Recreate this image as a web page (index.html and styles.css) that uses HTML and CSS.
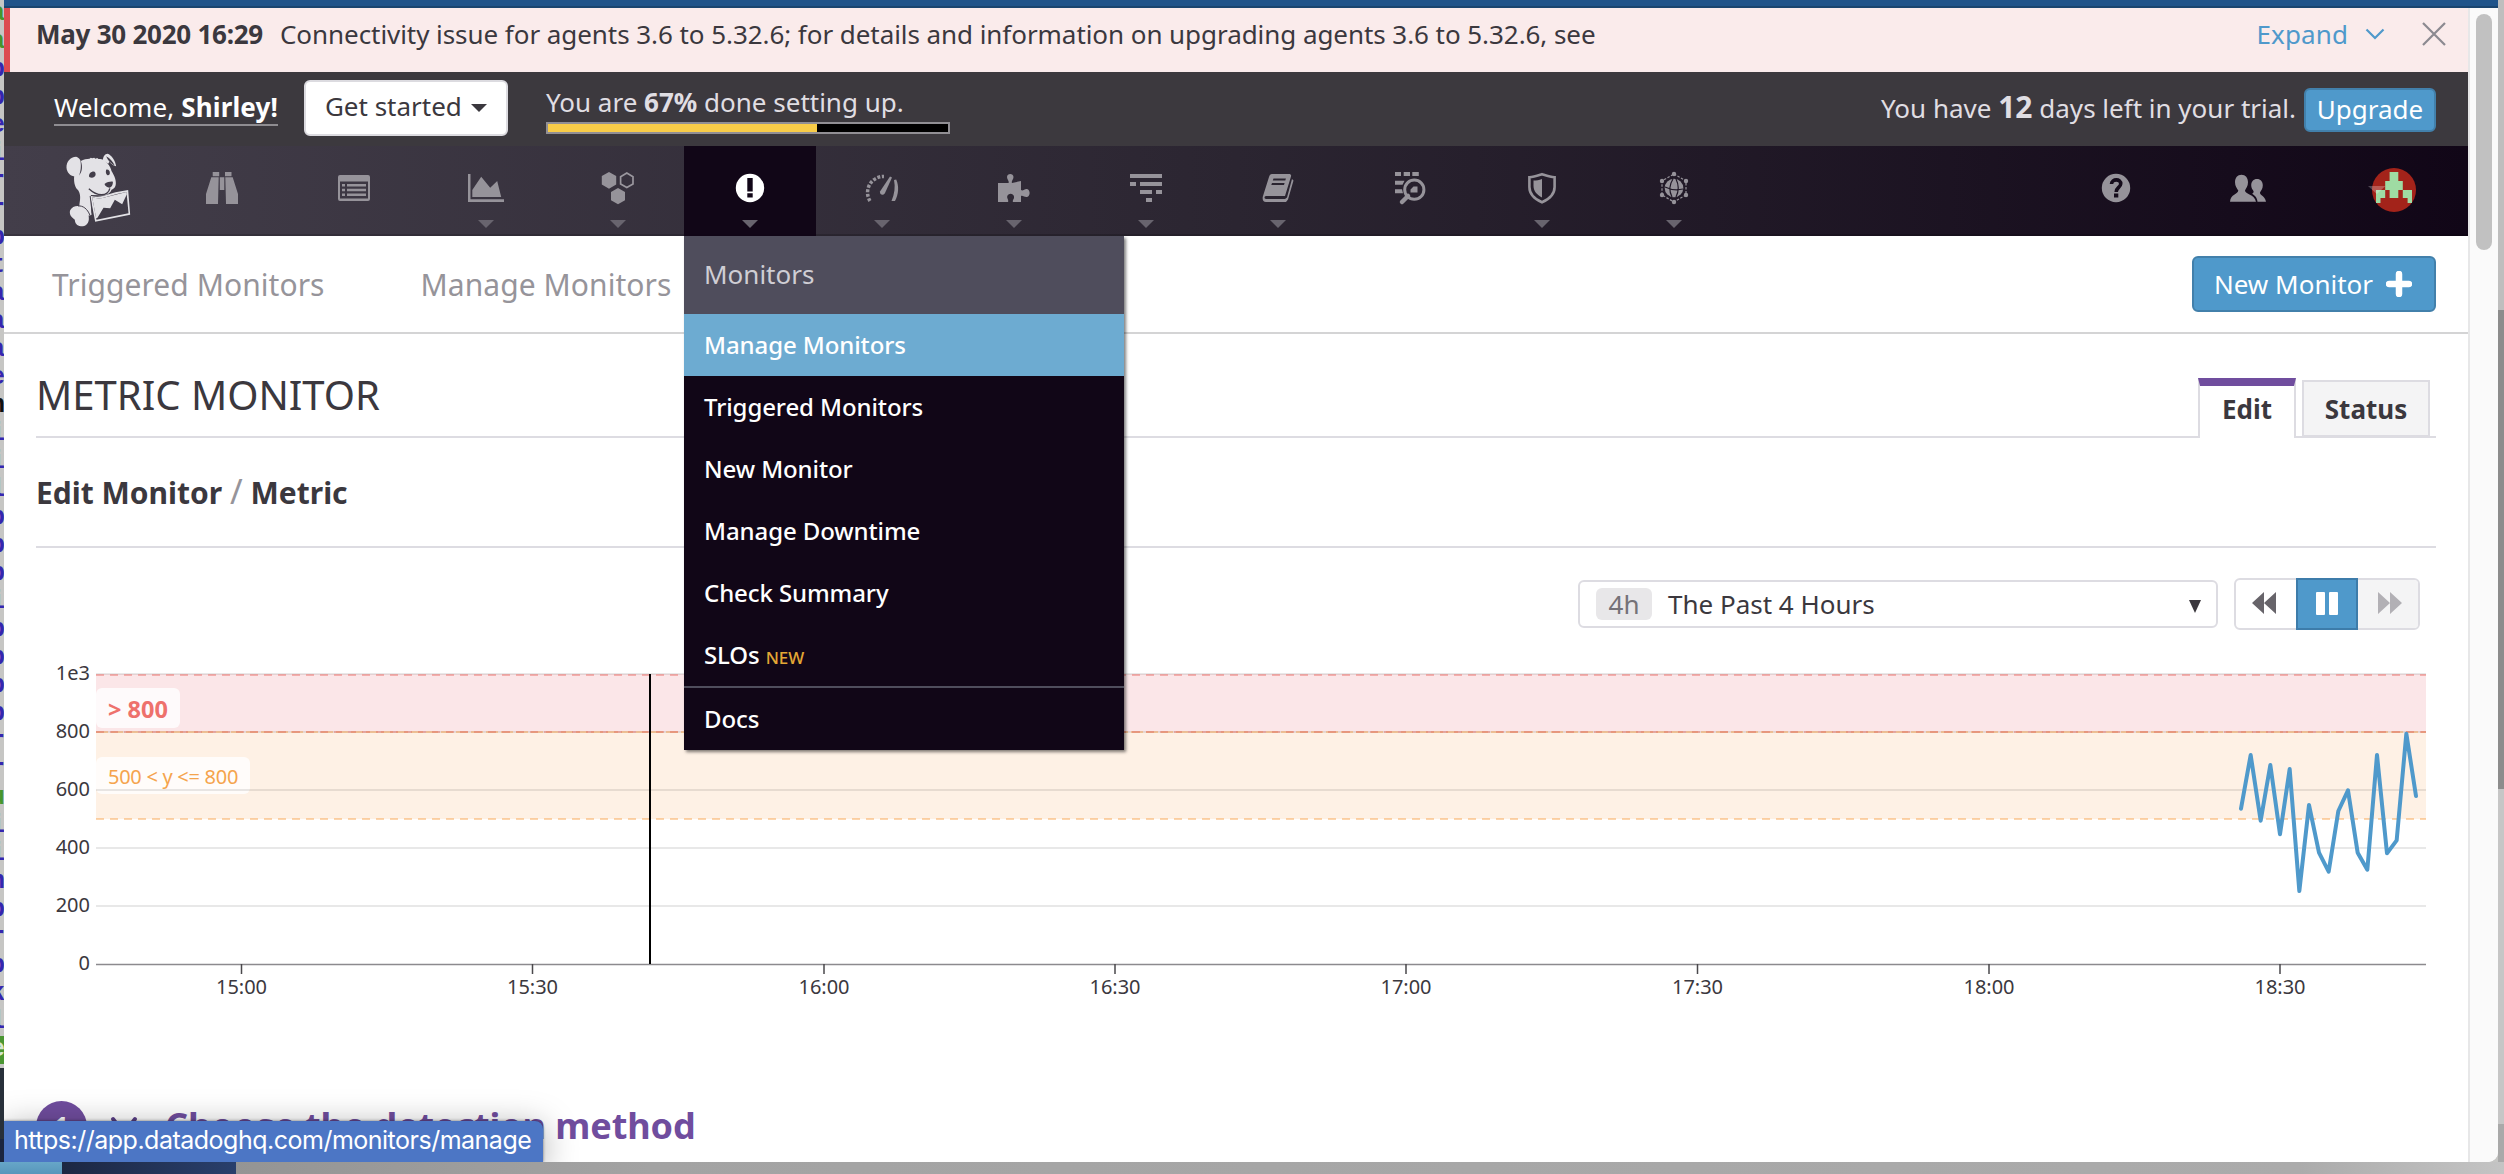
FILE: index.html
```html
<!DOCTYPE html>
<html lang="en">
<head>
<meta charset="utf-8">
<title>Metric Monitor</title>
<link rel="stylesheet" href="styles.css">
</head>
<body>
<div class="desktop">
  <div class="code-strip"><span class="g">a</span><span class="g">a</span><span>p</span><span>p</span><span>e</span><span>i</span><span>r</span><span>r</span><span>p</span><span>t</span><span>a</span><span>a</span><span>a</span><span>e</span><span class="k">n</span><span>i</span><span>i</span><span>l</span><span>p</span><span>p</span><span>p</span><span>i</span><span>p</span><span>p</span><span>p</span><span>p</span><span>r</span><span>r</span><span class="g">u</span><span>i</span><span>i</span><span>n</span><span>p</span><span>r</span><span>p</span><span>k</span><span>l</span><span class="hl">e</span></div>
  <div class="window">
    <div class="page">
      <div class="banner">
        <strong>May 30 2020 16:29</strong>
        <span class="banner-text">Connectivity issue for agents 3.6 to 5.32.6; for details and information on upgrading agents 3.6 to 5.32.6, see</span>
        <a class="expand">Expand</a>
        <svg class="chev" width="20" height="12" viewBox="0 0 20 12"><path d="M1.5 1.5 10 10l8.500-8.500" fill="none" stroke="#4f99cb" stroke-width="2.200"/></svg>
        <svg class="close" width="24" height="24" viewBox="0 0 24 24"><path d="M1 1 23 23M23 1 1 23" stroke="#8b8990" stroke-width="2.200"/></svg>
      </div>
      <div class="trial">
        <a class="welcome">Welcome, <b>Shirley!</b></a>
        <button class="start">Get started<i class="caret"></i></button>
        <div class="setup">
          <div>You are <b>67%</b> done setting up.</div>
          <div class="bar"><div class="fill"></div></div>
        </div>
        <div class="left-days">You have <b>12</b> days left in your trial.</div>
        <button class="upgrade">Upgrade</button>
      </div>
      <nav class="nav">
        <a class="logo"><svg width="65" height="74" viewBox="48 28 194 222">
          <g fill="#e3e2e6">
            <path d="M78 39C60 40 48 54 49 72C50 86 60 98 76 98C88 96 96 84 95 66C94 52 88 42 78 39z"/>
            <path d="M92 52C100 47 110 45 118 45L122 42L126 44L132 42L136 45L141 43L145 46C152 46 158 47 162 50C172 58 182 70 184 82C190 92 198 106 197 120C196 132 190 136 184 138C180 150 168 155 154 155L122 154L124 214L112 216L86 200L88 180C92 160 90 150 84 140C76 132 70 120 72 96z"/>
            <path d="M158 50C158 40 164 30 172 30C184 33 196 52 198 68C190 66 182 60 178 54L174 60z"/>
            <path d="M60 200C66 188 82 184 96 190C110 196 118 212 116 228C114 242 104 249 92 248C80 246 74 238 74 228C64 222 56 212 60 200z"/>
            <path fill-rule="evenodd" d="M120 156C132 159 144 161 158 157L196 146L234 139L240 213L135 234zM126 161L139 228L235 209L229 145L200 151L160 162C148 166 138 164 126 161z"/>
            <path d="M126 161C138 164 148 166 160 162L229 145L230 152L216 182L194 168L180 194L160 192L142 222L138 224z"/>
          </g>
          <g fill="#433e4a">
            <path d="M90 48C98 62 98 84 86 96C92 84 94 64 90 48zM168 38C180 44 188 54 194 66C182 60 172 50 168 38z"/>
            <path d="M126 84C134 81 138 88 136 95C133 103 124 104 117 100C115 92 119 86 126 84zM168 78C175 76 180 82 179 89C178 95 174 96 171 94C167 90 166 84 168 78zM163 121C171 115 181 113 188 114C189 122 184 131 178 132C171 131 165 128 163 121z"/>
          </g>
          <path d="M116 135C128 146 140 153 154 153C168 153 176 147 179 134" fill="none" stroke="#433e4a" stroke-width="4"/>
          <path d="M84 187C98 185 112 196 119 214M120 157L126 208" fill="none" stroke="#433e4a" stroke-width="3"/>
        </svg></a>
        <a class="item"><svg class="ic" viewBox="0 0 36 36"><path d="M8.700 2h6.500v4.300H8.700zM21 2h6.500v4.300H21zM7.300 7.300h7.400L14 34H2V24zM28.700 7.300h-7.400L22 34h12V24zM15.800 7.300h4.500V20h-4.500z"/></svg></a>
        <a class="item"><svg class="ic" viewBox="0 0 36 36"><path fill-rule="evenodd" d="M4 5h28a2 2 0 0 1 2 2v22a2 2 0 0 1-2 2H4a2 2 0 0 1-2-2V7a2 2 0 0 1 2-2zM4 11.500v17h28v-17z"/><path d="M6 14h3v2.500H6zM11 14h19v2.500H11zM6 18.800h3v2.500H6zM11 18.800h19v2.500H11zM6 23.500h3V26H6zM11 23.500h19V26H11z"/></svg></a>
        <a class="item more"><svg class="ic" viewBox="0 0 36 36"><path d="M0 4h2.500v25.200H36V32H0zM4.300 27v-7l8.900-13.300 9 11 7-6.700 4 16z"/></svg></a>
        <a class="item more"><svg class="ic" viewBox="0 0 36 36"><path d="m9 2 7.200 4v8.500L9 18.700l-7.200-4.200V6zM18 18l7 4v8.200l-7 4.100-7-4.100V22z"/><path d="m26.800 3 6.200 3.700v7.200l-6.200 3.700-6.200-3.700V6.700z" fill="none" stroke="#9a979e" stroke-width="1.700"/></svg></a>
        <div class="item more active"><svg class="ic" viewBox="0 0 36 36"><circle cx="18" cy="18" r="14.200" fill="#fff"/><path d="M15.300 8h5.400v13.500h-5.400zM15.300 23.200h5.400v4.200h-5.400z" fill="#110617"/></svg>
          <div class="menu">
            <div class="menu-head">Monitors</div>
            <a class="sel">Manage Monitors</a>
            <a>Triggered Monitors</a>
            <a>New Monitor</a>
            <a>Manage Downtime</a>
            <a>Check Summary</a>
            <a>SLOs <small>NEW</small></a>
            <a class="docs">Docs</a>
          </div>
        </div>
        <a class="item more"><svg class="ic" viewBox="0 0 36 36"><path d="M6 31A16 16 0 0 1 20 6.500" fill="none" stroke="#96939a" stroke-width="3.500" stroke-dasharray="3 1.600"/><path d="M26 6.500 28 7.600 21 23c-1.500 3-5.500 2-5-1.500z"/><path d="m30 10 2.200-.5c3 6.500 2.500 15-1.200 21.500h-3.500c3-7 4-14 2.500-21z"/></svg></a>
        <a class="item more"><svg class="ic" viewBox="0 0 36 36"><path d="M2 13h10.500c1-2-1.500-3.500-1.500-6 0-4 6.500-4 6.500 0 0 2.500-2.500 4-1.500 6l9-2v9c2 1.500 3.500-1.500 6-1 3.500 1 3.500 7 0 8-2.500.5-4-2-6-1v6h-8c-1-2 1.500-3 1-5.500-.8-3.800-6-3.800-6.800 0-.4 2.500 1.800 3.500.8 5.500H2z"/></svg></a>
        <a class="item more"><svg class="ic" viewBox="0 0 36 36"><path d="M2 4h32v4H2zM2 12h6v4H2zM12 12h22v4H12zM12 20h12v4H12zM28 20h6v4h-6zM18 28h6v4h-6z"/></svg></a>
        <a class="item more"><svg class="ic" viewBox="0 0 36 36"><path fill-rule="evenodd" d="M12 4h17c1.500 0 2.500 1 2 2.500L25 26H6c-2 0-2 3 0 3h19l2-1.500L32 9l1.500 1.500-5.500 19-2 2.500H6c-3 0-4-3-3-6L9 7c.5-2 1.500-3 3-3zM13.500 8.500l-.7 2h12.500l.6-2zM12 13l-.7 2H24l.6-2z"/></svg></a>
        <a class="item"><svg class="ic" viewBox="0 0 36 36"><path d="M3 2h6v4H3zM11.700 2H18v4h-6.300zM20.300 2h6.500v4h-6.500zM3 10.700h9.500l-2 4H3zM3 19.300h7l1 4H3zM18.500 22.500v-3l3-3h4v6z"/><circle cx="22.300" cy="19.700" r="9.600" fill="none" stroke="#96939a" stroke-width="3"/><path d="m16 26-6 6" stroke="#96939a" stroke-width="4.500" stroke-linecap="round"/></svg></a>
        <a class="item more"><svg class="ic" viewBox="0 0 36 36"><path d="M18 4.200c4 1.200 8 2.600 12.600 3V17c0 7-5 12-12.600 15.300C10.400 29 5.400 24 5.400 17V7.200C10 6.800 14 5.400 18 4.200z" fill="none" stroke="#96939a" stroke-width="2.600"/><path d="M18 9v18.500C13 25 9.500 21 9.500 16v-5.500C12.500 10.500 15 10 18 9z"/></svg></a>
        <a class="item more"><svg class="ic" viewBox="0 0 36 36"><path d="m18 4 12 7v14l-12 7-12-7V11z" fill="none" stroke="#96939a" stroke-width="1.200" stroke-dasharray="2.500 1.500"/><circle cx="18" cy="18" r="9.300"/><path d="M9 17c6 3 12 3.500 18 2M17 9c-4 6-4 12-1 18M20 9c3 6 3 12 0 18" fill="none" stroke="#211a28" stroke-width="1.200"/><circle cx="18" cy="4" r="2.200"/><circle cx="18" cy="32" r="2.200"/><circle cx="6" cy="11" r="2.200"/><circle cx="30" cy="11" r="2.200"/><circle cx="6" cy="25" r="2.200"/><circle cx="30" cy="25" r="2.200"/></svg></a>
        <a class="item push"><svg class="ic" viewBox="0 0 36 36"><circle cx="18" cy="18" r="14.200"/><path d="M13.500 14c.3-5.500 9.500-5.500 9.200 0-.2 3.500-4.500 3.500-4.500 8" fill="none" stroke="#150c1b" stroke-width="3.600"/><path d="M16 23.600h4.300v4H16z" fill="#150c1b"/></svg></a>
        <a class="item"><svg class="ic" viewBox="0 0 36 36"><path d="M11.500 4.700c4 0 6.500 3 6.500 7.500 0 4-2 6-3 8.300 0 4 9.500 3.500 11 11.300H0C.5 24 8 24.500 8.300 20.500 7 18.300 5 16.300 5 12.200c0-4.500 2.500-7.500 6.500-7.500z"/><path d="M27 9c3.500 0 5.800 2.600 5.800 6.300 0 3.700-1.800 5-2.800 7.200 0 3.500 5 3 6 9.300h-8.500c-.5-4.800-3-6.500-5.500-8 1.500-.8 1.800-1.800 1.500-2.800-1.200-1.800-2.300-3-2.300-5.700C21.200 11.600 23.500 9 27 9z"/></svg></a>
        <a class="user"><svg width="48" height="44" viewBox="0 0 48 44"><ellipse cx="26" cy="22" rx="22" ry="22" fill="#a3231a"/><path d="M21.600 4h8.700v9h4.500v9h9.200v13h-4.400v-5h-4.800v-8h-4.500v8h-8.700v-8h-4.400v8H12.500v5H8V22h9.200v-9h4.400z" fill="#9fdba3"/><path d="M0 18h17.500l-8.700 8z" fill="#fff" opacity=".25"/></svg></a>
      </nav>
      <div class="subnav"><a class="trig">Triggered Monitors</a><a>Manage Monitors</a>
        <button class="new">New Monitor <svg width="26" height="26" viewBox="0 0 26 26"><path d="M13 3v20M3 13h20" stroke="#fff" stroke-width="6.500" stroke-linecap="round"/></svg></button></div>
      <main class="main">
        <div class="title-row"><h1>METRIC MONITOR</h1><div class="tabs"><a class="tab on">Edit</a><a class="tab">Status</a></div></div>
        <h2>Edit Monitor <i>/</i> Metric</h2>
        <div class="controls">
          <div class="select"><span class="pill">4h</span><span>The Past 4 Hours</span><svg width="12" height="13" viewBox="0 0 12 13"><path d="M0 0h12L6 13z" fill="#3b383e"/></svg></div>
          <div class="player">
            <a class="rew"><svg width="24" height="22" viewBox="0 0 24 22"><path d="M12 0v22L0 11zM24 0v22L12 11z" fill="#67646a"/></svg></a>
            <a class="pause"><svg width="24" height="24" viewBox="0 0 24 24"><rect x="1" y="1" width="9" height="23" rx="1" fill="#fff"/><rect x="14" y="1" width="9" height="23" rx="1" fill="#fff"/></svg></a>
            <a class="fwd"><svg width="24" height="22" viewBox="0 0 24 22"><path d="M0 0v22l12-11zM12 0v22l12-11z" fill="#b2b0b5"/></svg></a>
          </div>
        </div>
        <svg class="chart" width="2400" height="370" viewBox="36 650 2400 370">
          <rect x="96" y="674" width="2330" height="58" fill="#fbe6e8"/>
          <rect x="96" y="732" width="2330" height="87" fill="#fef1e5"/>
          <rect x="96" y="688" width="84" height="40" rx="6" fill="#fff" opacity=".8"/>
          <rect x="96" y="757" width="154" height="37" rx="6" fill="#fff" opacity=".8"/>
          <g fill="#000" opacity=".09"><path d="M96 673h2330v2H96zM96 731h2330v2H96zM96 789h2330v2H96zM96 847h2330v2H96zM96 905h2330v2H96z"/></g>
          <g fill="none" stroke-width="2">
            <path d="M96 675h2330" stroke="#eb6a64" stroke-opacity=".45" stroke-dasharray="8 6"/>
            <path d="M96 732h2330" stroke="#f5a04a" stroke-opacity=".45" stroke-dasharray="12 3"/>
            <path d="M96 732h2330" stroke="#e06a64" stroke-opacity=".45" stroke-dasharray="8 6"/>
            <path d="M96 819h2330" stroke="#f9a14a" stroke-opacity=".45" stroke-dasharray="8 6"/>
          </g>
          <path d="M96 964.500h2330" stroke="#8c8a8e" stroke-width="1.500"/>
          <path d="M241.500 964v10M532.500 964v10M824 964v10M1115 964v10M1406 964v10M1697.500 964v10M1989 964v10M2280 964v10" stroke="#4a484c" stroke-width="1.500"/>
          <path d="M650 674v290" stroke="#000" stroke-width="2"/>
          <text class="crit" x="108" y="718">&gt; 800</text>
          <text class="warn" x="108" y="784">500 &lt; y &lt;= 800</text>
          <g class="ylab"><text x="90" y="680">1e3</text><text x="90" y="738">800</text><text x="90" y="796">600</text><text x="90" y="854">400</text><text x="90" y="912">200</text><text x="90" y="970">0</text></g>
          <g class="xlab"><text x="241.500" y="994">15:00</text><text x="532.500" y="994">15:30</text><text x="824" y="994">16:00</text><text x="1115" y="994">16:30</text><text x="1406" y="994">17:00</text><text x="1697.500" y="994">17:30</text><text x="1989" y="994">18:00</text><text x="2280" y="994">18:30</text></g>
          <polyline transform="translate(2150 660) scale(.33333)" points="273,446 302,285 332,482 361,315 390,523 419,327 448,693 477,435 507,578 536,635 565,453 594,391 623,578 652,629 681,285 711,580 740,541 769,221 798,408" fill="none" stroke="#4f99cb" stroke-width="12" stroke-linecap="round" stroke-linejoin="round"/>
        </svg>
        <div class="step"><span class="num">1</span><svg width="30" height="20" viewBox="0 0 30 20"><path d="M3 3l6 8M25 3l-6 8" stroke="#5c4089" stroke-width="4" stroke-linecap="round"/></svg><h3>Choose the detection method</h3></div>
      </main>
    </div>
    <div class="scroll"><div class="thumb"></div></div>
    <div class="url">https://app.datadoghq.com/monitors/manage</div>
  </div>
</div>
</body>
</html>
```
FILE: styles.css
```css
* { box-sizing: border-box; }
body { margin: 0; font: 26px "Noto Sans", "Open Sans", sans-serif; color: #3b383e; }
button { font: inherit; }
.desktop {
  position: relative; width: 2504px; height: 1174px; overflow: hidden; padding-left: 4px;
  background:
    linear-gradient(#67a6c8, #5796bb) 0 1162px / 62px 12px no-repeat,
    linear-gradient(90deg, #1c2742, #293f6c) 62px 1162px / 174px 12px no-repeat,
    linear-gradient(90deg, #8c8c8c, #a3a3a3 650px, #ababab 2300px, #c4c4c4) 0 1162px / 2504px 12px no-repeat,
    linear-gradient(#bebebe 0 310px, #8c8c8c 310px 789px, #c6c6c6 789px 1124px, #a9a9a9 1124px) 2498px 0 / 6px 1162px no-repeat,
    #c6c6c4;
}
.code-strip {
  position: absolute; left: 0; top: 0; width: 4px; height: 1162px; overflow: hidden;
  font: 700 25px/28px "Liberation Mono", monospace; color: #3526b0;
  background: linear-gradient(transparent 1068px, #28303a 1068px 1139px, #1b2540 1139px);
}
.code-strip span { display: block; height: 28px; width: 15px; margin-left: -10px; }
.code-strip .g { color: #45962c; }
.code-strip .k { color: #111; }
.code-strip .hl { background: #4a9632; color: #d6e6d0; }
.window { position: relative; display: flex; width: 2494px; height: 1162px; overflow: hidden; background: #fff; border-top: 6px solid #20548a; border-bottom-right-radius: 10px; }
.window::before { content: ""; position: absolute; left: 0; top: 0; width: 2494px; height: 2px; background: #1a456f; z-index: 1; }
.page { width: 2464px; padding-top: 2px; overflow: hidden; }
.scroll { width: 30px; padding: 8px 6px; background: #fafafa; border-left: 2px solid #e7e7e8; }
.thumb { width: 16px; height: 236px; border-radius: 8px; background: #c1c1c1; }

.banner { display: flex; align-items: center; height: 64px; padding: 0 22px 12px 26px; background: #faebeb; border-left: 6px solid #dc4a50; }
.banner strong { letter-spacing: -.25px; }
.banner-text { margin-left: 17px; letter-spacing: -.06px; }
.expand { margin-left: auto; letter-spacing: .1px; }
.expand { color: #4f99cb; }
.chev { margin: 0 37px 0 17px; }

.trial { display: flex; align-items: center; height: 74px; padding: 0 32px 0 50px; background: #3c393e; color: #e0dee3; }
.welcome { color: #fff; line-height: 34px; border-bottom: 2px solid #8f8d91; margin-bottom: 2px; letter-spacing: .14px; }
.start { display: flex; align-items: center; justify-content: center; gap: 9px; width: 204px; height: 56px; margin: 0 38px 2px 26px; padding: 0 0 4px; background: #fff; border: 2px solid #dcdbe0; border-radius: 6px; color: #3b383e; }
.caret { margin-top: 4px; border: 8px solid transparent; border-top-color: #3b383e; border-bottom: 0; }
.setup { width: 404px; line-height: 36px; }
.setup div:first-child { white-space: nowrap; }
.bar { height: 12px; margin-top: 2px; background: #000; border: 2px solid #918f94; }
.fill { width: 67.3%; height: 8px; background: #f8cc48; }
.left-days { margin-left: auto; line-height: 44px; margin-bottom: 2px; }
.left-days b { font-size: 30px; line-height: 30px; }
.upgrade { width: 132px; height: 44px; margin: 2px 0 0 8px; padding: 0 0 2px; color: #fff; background: #4f99cb; border: 2px solid #4280ab; border-radius: 6px; }

.nav { display: flex; height: 90px; background: linear-gradient(90deg, #433e4a, #2b2531 50%, #110617); box-shadow: inset 0 -2px rgba(0,0,0,.15); }
.logo { width: 152px; padding: 7px 0 0 62px; }
.item { position: relative; width: 132px; display: flex; justify-content: center; padding-top: 24px; fill: #96939a; }
.ic { width: 36px; height: 36px; overflow: visible; }
.more::after { content: ""; position: absolute; left: 58px; top: 74px; border: 8px solid transparent; border-top-color: #68646e; border-bottom: 0; }
.active { background: #110617; z-index: 5; }
.push { margin-left: auto; }
.user { width: 154px; padding: 22px 0 0 54px; }
.menu { position: absolute; left: 0; top: 90px; width: 440px; height: 514px; background: #110617; color: #fff; font-size: 24px; font-weight: 500; letter-spacing: -.1px; line-height: 62px; box-shadow: 2px 2px 3px rgba(0,0,0,.5); }
.menu a, .menu-head { display: block; height: 62px; padding-left: 20px; }
.menu-head { height: 78px; line-height: 76px; background: #4f4d5c; color: #cfced4; font-size: 26px; font-weight: 400; letter-spacing: 0; }
.menu .sel { background: #6dabd1; }
.menu .docs { height: 64px; border-top: 2px solid #4f4d5c; }
.menu small { font-size: 17px; color: #e3a735; }

.subnav { display: flex; align-items: center; height: 98px; padding: 0 32px 0 48px; border-bottom: 2px solid #d4d4d5; font-size: 30px; letter-spacing: .06px; color: #96949a; }
.trig { margin-right: 96px; }
.new { display: flex; align-items: center; justify-content: center; gap: 13px; margin-left: auto; width: 244px; height: 56px; padding: 0 2px 0 0; font-size: 26px; color: #fff; background: #4f99cb; border: 2px solid #4280ab; border-radius: 6px; }

.main { padding: 0 32px; }
.title-row { display: flex; justify-content: space-between; height: 104px; border-bottom: 2px solid #dddce2; }
h1 { margin: 0; font-size: 40px; font-weight: 400; line-height: 122px; }
.tabs { display: flex; align-items: flex-start; gap: 6px; padding: 44px 6px 0 0; font-weight: 700; }
.tab { height: 57px; width: 128px; margin-top: 2px; line-height: 54px; text-align: center; background: #f4f4f5; border: 2px solid #dddce2; }
.tab.on { width: 98px; height: 60px; margin-top: 0; line-height: 46px; background: #fff; border-top: 8px solid #704d9e; border-bottom: 0; }
h2 { margin: 0; height: 110px; line-height: 110px; font-size: 30px; border-bottom: 2px solid #dddce2; }
h2 i { font-weight: 400; font-style: normal; font-size: 34px; line-height: 30px; color: #96949a; }
.controls { display: flex; align-items: flex-start; justify-content: flex-end; gap: 16px; height: 102px; padding: 30px 16px 0 0; }
.select { display: flex; align-items: center; width: 640px; height: 48px; margin-top: 2px; padding: 0 15px 0 16px; border: 2px solid #dddce2; border-radius: 6px; }
.select svg { margin: 4px 0 0 auto; }
.pill { width: 56px; height: 32px; line-height: 32px; margin-right: 16px; text-align: center; background: #e8e7e9; border-radius: 6px; color: #757278; }
.player { display: flex; width: 186px; height: 52px; border: 2px solid #dddce2; border-radius: 6px; }
.player a { display: flex; align-items: center; justify-content: center; width: 60px; padding-bottom: 2px; }
.player .rew { padding-right: 4px; }
.player .pause { width: 62px; margin: -2px 0; background: #4f99cb; border: 2px solid #3d7caa; }
.player .fwd { padding-left: 4px; background: #f4f4f5; border-radius: 0 4px 4px 0; }
.chart { display: block; }
.chart text { font-size: 20px; fill: #3b383e; }
.chart .ylab { text-anchor: end; }
.chart .xlab { text-anchor: middle; }
.chart .crit { font-size: 23.500px; font-weight: 700; fill: #ee716c; }
.chart .warn { fill: #f5a44d; letter-spacing: -.28px; }
.step { display: flex; align-items: center; height: 50px; margin-top: 81px; color: #704d9e; }
.num { width: 51px; height: 51px; line-height: 50px; border-radius: 50%; background: #704d9e; color: #fff; font-weight: 700; text-align: center; }
.step svg { margin: 0 25px 0 23px; }
h3 { margin: 0; font-size: 36px; line-height: 50px; letter-spacing: -.08px; }
.url { position: absolute; left: 0; bottom: 0; width: 539px; height: 41px; padding-left: 10px; font: 25px/39px Inter, "Liberation Sans", sans-serif; letter-spacing: -.5px; color: #fff; background: #4c76c5; border-radius: 0 8px 0 0; box-shadow: 0 0 3px rgba(0,0,0,.5), 0 6px 34px rgba(0,0,0,.35); white-space: nowrap; }
```
